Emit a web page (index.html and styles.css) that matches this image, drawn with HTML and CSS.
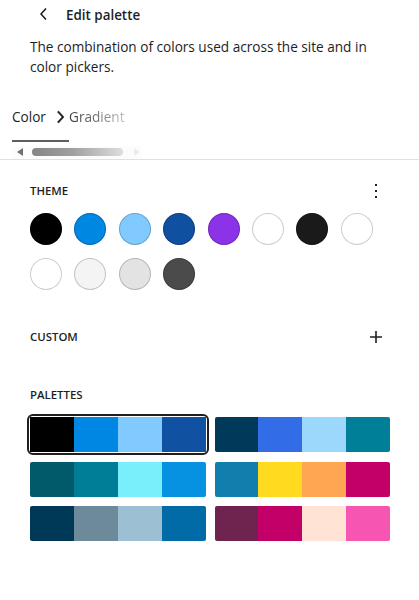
FILE: index.html
```html
<!DOCTYPE html>
<html lang="en">
<head>
<meta charset="utf-8">
<title>Edit palette</title>
<link rel="stylesheet" href="styles.css">
</head>
<body>
<div class="panel">
  <div class="header">
    <button class="icon-btn back" aria-label="Back">
      <svg viewBox="0 0 24 24" width="24" height="24"><path d="M14.6 7l-1.2-1L8 12l5.4 6 1.2-1-4.6-5z"/></svg>
    </button>
    <h2 class="title">Edit palette</h2>
  </div>
  <p class="desc">The combination of colors used across the site and in color pickers.</p>

  <div class="tabs">
    <div class="tabs-scroll">
      <div class="tablist">
        <span class="tab active">Color</span>
        <span class="tab fade">Gradient</span>
      </div>
      <span class="tab-chev">
        <svg viewBox="0 0 24 24" width="24" height="24"><path d="M10.6 6L9.4 7l4.6 5-4.6 5 1.2 1 5.4-6z"/></svg>
      </span>
      <div class="scrollbar">
        <span class="arrow-left"></span>
        <span class="thumb"></span>
        <span class="arrow-right"></span>
      </div>
    </div>
  </div>

  <div class="content">
    <section class="section">
      <div class="section-head">
        <h3 class="heading">Theme</h3>
        <button class="icon-btn" aria-label="Options">
          <svg viewBox="0 0 24 24" width="24" height="24"><path d="M13 19h-2v-2h2v2zm0-6h-2v-2h2v2zm0-6h-2V5h2v2z"/></svg>
        </button>
      </div>
      <div class="circles">
        <span class="circle" style="background:#000000"></span>
        <span class="circle" style="background:#0087e2"></span>
        <span class="circle" style="background:#80caff"></span>
        <span class="circle" style="background:#1050a0"></span>
        <span class="circle" style="background:#8c33e7"></span>
        <span class="circle" style="background:#ffffff"></span>
        <span class="circle" style="background:#1a1a1a"></span>
        <span class="circle" style="background:#ffffff"></span>
        <span class="circle" style="background:#ffffff"></span>
        <span class="circle" style="background:#f4f4f4"></span>
        <span class="circle" style="background:#e3e3e3"></span>
        <span class="circle" style="background:#4b4b4b"></span>
      </div>
    </section>

    <section class="section custom">
      <div class="section-head">
        <h3 class="heading">Custom</h3>
        <button class="icon-btn" aria-label="Add color">
          <svg viewBox="0 0 24 24" width="24" height="24"><path d="M18 11.2h-5.2V6h-1.6v5.2H6v1.6h5.2V18h1.6v-5.2H18z"/></svg>
        </button>
      </div>
    </section>

    <section class="section palettes-sec">
      <div class="section-head">
        <h3 class="heading">Palettes</h3>
      </div>
      <div class="palettes">
        <div class="palette selected">
          <span style="background:#000000"></span><span style="background:#0087e4"></span><span style="background:#80caff"></span><span style="background:#1151a1"></span>
        </div>
        <div class="palette">
          <span style="background:#003a5b"></span><span style="background:#326ce6"></span><span style="background:#9cd8fc"></span><span style="background:#007f99"></span>
        </div>
        <div class="palette">
          <span style="background:#005a6a"></span><span style="background:#007e97"></span><span style="background:#79effb"></span><span style="background:#0692e1"></span>
        </div>
        <div class="palette">
          <span style="background:#117fae"></span><span style="background:#ffda1f"></span><span style="background:#ffa653"></span><span style="background:#c20067"></span>
        </div>
        <div class="palette">
          <span style="background:#003958"></span><span style="background:#6d8a9b"></span><span style="background:#9dbfd3"></span><span style="background:#006ba6"></span>
        </div>
        <div class="palette">
          <span style="background:#6f234f"></span><span style="background:#c20067"></span><span style="background:#ffe4d5"></span><span style="background:#f656b2"></span>
        </div>
      </div>
    </section>
  </div>
</div>
</body>
</html>
```

FILE: styles.css
```css
* { box-sizing: border-box; }

html, body {
  margin: 0;
  padding: 0;
  background: #ffffff;
}

body {
  font-family: "Open Sans", "Noto Sans", sans-serif;
  color: #1e1e1e;
  font-size: 13px;
}

.panel {
  width: 419px;
}

.icon-btn {
  width: 24px;
  height: 24px;
  padding: 0;
  margin: 0;
  border: 0;
  background: none;
  display: flex;
  align-items: center;
  justify-content: center;
  cursor: pointer;
}

.icon-btn svg {
  fill: #1e1e1e;
  display: block;
}

.header {
  display: flex;
  align-items: center;
  height: 24px;
  margin-top: 2px;
  padding-left: 32px;
  gap: 10px;
}

.title {
  margin: 0;
  font-size: 13.4px;
  font-weight: 600;
  line-height: 20px;
  position: relative;
  top: 1px;
}

.desc {
  margin: 11px 40px 0 30px;
  font-size: 13.6px;
  line-height: 20px;
}

.tabs {
  margin-top: 30px;
  border-bottom: 1px solid #e0e0e0;
}

.tabs-scroll {
  position: relative;
  margin-left: 12px;
  width: 131px;
}

.tablist {
  display: flex;
  align-items: flex-end;
}

.tab {
  font-size: 13.6px;
  line-height: 20px;
  white-space: nowrap;
}

.tab.active {
  color: #1e1e1e;
  width: 57px;
  padding-bottom: 13px;
  border-bottom: 2px solid #5e5e5e;
}

.tab.fade {
  padding-bottom: 15px;
  background: linear-gradient(to right, #3c3c3c 0%, #6a6a6a 45%, #c4c4c4 100%);
  -webkit-background-clip: text;
  background-clip: text;
  color: transparent;
}

.tab-chev {
  position: absolute;
  left: 36px;
  top: -2px;
}

.tab-chev svg {
  display: block;
  fill: #1e1e1e;
  stroke: #1e1e1e;
  stroke-width: 0.5;
}

.scrollbar {
  position: relative;
  height: 13px;
  margin-top: 4px;
  background: #fcfcfc;
}

.arrow-left {
  position: absolute;
  left: 5px;
  top: 2px;
  width: 0;
  height: 0;
  border-top: 4px solid transparent;
  border-bottom: 4px solid transparent;
  border-right: 6px solid #707070;
}

.thumb {
  position: absolute;
  left: 20px;
  top: 2px;
  width: 91px;
  height: 8px;
  border-radius: 4px;
  background: linear-gradient(to right, #858585 0%, #a0a0a0 45%, #dedede 100%);
}

.arrow-right {
  position: absolute;
  left: 122px;
  top: 2px;
  width: 0;
  height: 0;
  border-top: 4px solid transparent;
  border-bottom: 4px solid transparent;
  border-left: 6px solid #ececec;
}

.content {
  padding: 19px 29px 40px 30px;
}

.section-head {
  display: flex;
  align-items: center;
  justify-content: space-between;
  height: 24px;
}

.section-head .icon-btn {
  margin-right: 2px;
}

.heading {
  margin: 0;
  font-size: 11.4px;
  font-weight: 600;
  text-transform: uppercase;
  line-height: 16px;
  color: #1e1e1e;
}

.circles {
  margin-top: 10px;
  display: grid;
  grid-template-columns: repeat(8, 32px);
  column-gap: 12.4px;
  row-gap: 13px;
}

.circle {
  width: 32px;
  height: 32px;
  border-radius: 50%;
  box-shadow: inset 0 0 0 1px rgba(0, 0, 0, 0.2);
}

.custom {
  margin-top: 35px;
}

.palettes-sec {
  margin-top: 34px;
}

.palettes {
  margin-top: 10px;
  display: grid;
  grid-template-columns: 1fr 1fr;
  column-gap: 9px;
  row-gap: 9.5px;
}

.palette {
  display: flex;
  height: 35px;
  border-radius: 2px;
  overflow: hidden;
}

.palette span {
  flex: 1;
}

.palette.selected {
  overflow: visible;
  outline: 2px solid #1e1e1e;
  outline-offset: 1px;
  border-radius: 3px;
}
```
